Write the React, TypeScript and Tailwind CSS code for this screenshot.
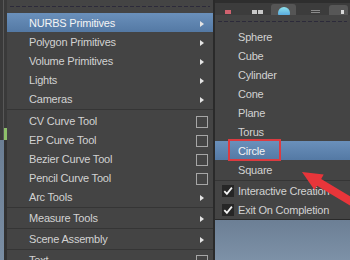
import * as React from 'react';

type Mark = 'sub' | 'box' | 'none';

interface Item {
  label: string;
  mark: Mark;
  active?: boolean;
  sepBefore?: 'wide' | 'thin';
}

const leftItems: Item[] = [
  { label: 'NURBS Primitives', mark: 'sub', active: true },
  { label: 'Polygon Primitives', mark: 'sub' },
  { label: 'Volume Primitives', mark: 'sub' },
  { label: 'Lights', mark: 'sub' },
  { label: 'Cameras', mark: 'sub' },
  { label: 'CV Curve Tool', mark: 'box', sepBefore: 'wide' },
  { label: 'EP Curve Tool', mark: 'box' },
  { label: 'Bezier Curve Tool', mark: 'box' },
  { label: 'Pencil Curve Tool', mark: 'box' },
  { label: 'Arc Tools', mark: 'sub' },
  { label: 'Measure Tools', mark: 'sub', sepBefore: 'thin' },
  { label: 'Scene Assembly', mark: 'sub', sepBefore: 'thin' },
  { label: 'Text', mark: 'box', sepBefore: 'thin' },
];

const shapes = ['Sphere', 'Cube', 'Cylinder', 'Cone', 'Plane', 'Torus', 'Circle', 'Square'];

function SubArrow() {
  return <span className="h-0 w-0 border-y-[3px] border-l-[4px] border-y-transparent border-l-[#e4e4e4]" />;
}

function OptionBox() {
  return <span className="h-[12px] w-[12px] border border-[#a6a6a6]" />;
}

function CheckBox() {
  return (
    <span className="flex h-[12px] w-[12px] items-center justify-center bg-[#262626]">
      <svg width="10" height="10" viewBox="0 0 10 10">
        <path d="M1.3 5.1 L3.9 7.9 L8.9 1.6" fill="none" stroke="#f4f4f4" strokeWidth="1.7" />
      </svg>
    </span>
  );
}

function TearOff({ tall }: { tall?: boolean }) {
  return (
    <div className={tall ? 'h-[13px] shrink-0 pt-[6px]' : 'h-[12px] shrink-0 pt-[6px]'}>
      <div className="mx-[3px] h-px bg-[repeating-linear-gradient(90deg,#2c2a3a_0_4px,transparent_4px_6px)]" />
    </div>
  );
}

function Separator({ wide }: { wide?: boolean }) {
  return (
    <div className={wide ? 'shrink-0 py-px' : 'shrink-0 pt-px'}>
      <div className="h-px bg-[#353535]" />
    </div>
  );
}

function LeftRow({ item }: { item: Item }) {
  return (
    <div
      className={
        item.active
          ? 'flex h-[19px] items-center pt-[2px] pl-[22px] pr-[5px] text-[#f4f4f4] bg-[linear-gradient(#6a90bb,#5479a4)]'
          : 'flex h-[19px] items-center pt-[2px] pl-[22px] pr-[5px] text-[#d2d2d2]'
      }
    >
      <span className="flex-1 whitespace-nowrap">{item.label}</span>
      <span className="flex w-[12px] items-center justify-center">
        {item.mark === 'sub' && <SubArrow />}
        {item.mark === 'box' && <OptionBox />}
      </span>
    </div>
  );
}

function ShapeRow({ label }: { label: string }) {
  const active = label === 'Circle';
  return (
    <div
      className={
        active
          ? 'relative flex h-[19px] shrink-0 items-center pt-[2px] pl-[23px] text-[#f4f4f4] bg-[linear-gradient(#6a90bb,#5479a4)]'
          : 'flex h-[19px] shrink-0 items-center pt-[2px] pl-[23px] text-[#d2d2d2]'
      }
    >
      <span className="whitespace-nowrap">{label}</span>
      {active && (
        <span className="absolute left-[13px] top-[-2px] h-[22px] w-[53px] border-[2.5px] border-[#db3b40]" />
      )}
    </div>
  );
}

function CheckRow({ label }: { label: string }) {
  return (
    <div className="flex h-[19px] shrink-0 items-center gap-[4px] pt-[1px] pl-[7px] text-[#d2d2d2]">
      <CheckBox />
      <span className="whitespace-nowrap pt-px">{label}</span>
    </div>
  );
}

function Toolbar() {
  return (
    <div className="flex h-[15px] shrink-0 items-start overflow-hidden bg-[#3c3c3c] border-t-[3px] border-[#2e2e2e]">
      <span className="ml-[10px] mt-[7px] h-[4px] w-[6px] bg-[#d0626f]" />
      <span className="ml-[21px] mt-[7px] flex gap-px">
        <span className="h-[4px] w-[5px] bg-[#c9c9c9]" />
        <span className="h-[4px] w-[5px] bg-[#c9c9c9]" />
      </span>
      <span className="ml-[8px] mt-[1px] flex h-[12px] w-[25px] justify-center rounded-t-[3px] bg-[#555555] pt-[3px]">
        <span className="h-[12px] w-[12px] rounded-full bg-[linear-gradient(#8fe3ee,#3f8fd6)]" />
      </span>
      <span className="ml-[15px] mt-[7px] h-[3px] w-[9px] border-y border-[#8a8a8a]" />
      <span className="ml-[9px] mt-[2px] flex h-[11px] w-[19px] justify-end rounded-t-[3px] bg-[#575757] pr-[4px] pt-[5px]">
        <span className="h-[4px] w-[3px] bg-[#d8d8d8]" />
      </span>
    </div>
  );
}

export default function App() {
  return (
    <div className="relative flex h-[260px] w-[350px] overflow-hidden bg-[#3a3a3a] font-['Liberation_Sans',sans-serif] text-[11px] tracking-[-0.2px]">
      {/* strip of the window behind */}
      <div className="flex w-[7px] flex-col">
        <div className="flex h-[140px] flex-col bg-[#3a3a3a] pl-[3px]">
          <div className="flex flex-1 flex-col border-l border-[#585858]">
            <div className="flex-1" />
            <span className="h-[12px] w-[3px] bg-[#8ec06a]" />
          </div>
        </div>
        <div className="flex flex-1">
          <div className="w-[4px] bg-[linear-gradient(#6b7e94,#7a8ea4)]" />
          <div className="flex-1 bg-[#323232]" />
        </div>
      </div>

      {/* main create menu */}
      <div className="w-[206px] bg-[#444444]">
        <TearOff tall />
        {leftItems.map((item) => (
          <React.Fragment key={item.label}>
            {item.sepBefore && <Separator wide={item.sepBefore === 'wide'} />}
            <LeftRow item={item} />
          </React.Fragment>
        ))}
      </div>

      {/* sub menu column */}
      <div className="flex flex-1 flex-col border-l-2 border-[#2a2a2a]">
        <Toolbar />
        <div className="flex shrink-0 flex-col bg-[#444444] border-b border-[#2a2a2a]">
          <TearOff />
          {shapes.map((s) => (
            <ShapeRow key={s} label={s} />
          ))}
          <Separator />
          <CheckRow label="Interactive Creation" />
          <CheckRow label="Exit On Completion" />
        </div>
        <div className="flex-1 bg-[linear-gradient(#6c7f95,#7d91a7)]" />
      </div>

      {/* red annotation arrow */}
      <svg className="pointer-events-none absolute left-0 top-0" width="350" height="260" viewBox="0 0 350 260">
        <polygon
          points="302,172 323.7,174.6 321.2,178.9 367.1,206.4 362.9,213.2 317,185.7 314.5,190"
          fill="#e8353a"
        />
      </svg>
    </div>
  );
}
